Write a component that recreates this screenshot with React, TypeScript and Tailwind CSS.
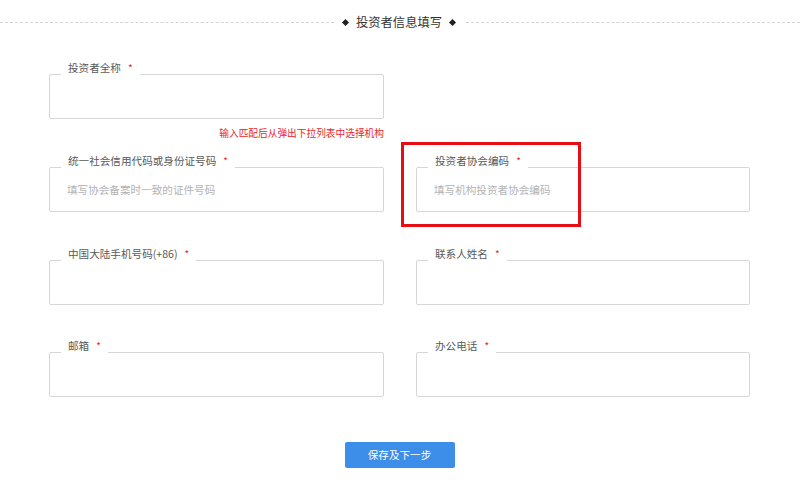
import React from "react";

const font = { fontFamily: '"Noto Sans CJK SC", "Noto Sans", sans-serif' };

function Field({
  label,
  placeholder,
  children,
}: {
  label: string;
  placeholder?: string;
  children?: React.ReactNode;
}) {
  return (
    <div className="relative">
      <div className="relative h-[45px] rounded-[2px] border border-[#d6d6d6] bg-white">
        <input
          className="h-full w-full bg-transparent pl-[17px] text-[10.6px] text-[#333] outline-none placeholder:text-[#b3b3b3]"
          placeholder={placeholder}
        />
        <div className="absolute left-[11px] top-[-17px] flex h-[20px] items-center bg-white px-[7px] text-[10.6px] leading-[20px] text-[#595959]">
          <span>{label}</span>
          <span className="ml-[7px] text-[10px] text-[#e8262b]">*</span>
        </div>
      </div>
      {children}
    </div>
  );
}

export default function App() {
  return (
    <div className="h-[488px] w-[800px] overflow-hidden bg-white" style={font}>
      <div className="mt-[12px] flex h-[20px] items-center">
        <div className="h-0 flex-1 border-t border-dashed border-[#d4d4d4]" />
        <div className="ml-[9px] h-[5px] w-[5px] rotate-45 bg-[#222]" />
        <div className="mx-[8px] text-[12.3px] leading-[20px] text-[#333]">投资者信息填写</div>
        <div className="mr-[11px] h-[5px] w-[5px] rotate-45 bg-[#222]" />
        <div className="h-0 flex-1 border-t border-dashed border-[#d4d4d4]" />
      </div>

      <div className="mt-[42px] grid grid-cols-[335px_334px] gap-x-[32px] pl-[49px]">
        <div>
          <Field label="投资者全称" />
          <div className="mt-[7px] text-right text-[9.7px] leading-[14px] text-[#e8262b]">
            输入匹配后从弹出下拉列表中选择机构
          </div>
        </div>
        <div />
      </div>

      <div className="mt-[27px] grid grid-cols-[335px_334px] gap-x-[32px] pl-[49px]">
        <Field label="统一社会信用代码或身份证号码" placeholder="填写协会备案时一致的证件号码" />
        <Field label="投资者协会编码" placeholder="填写机构投资者协会编码">
          <div className="pointer-events-none absolute left-[-15px] top-[-25px] h-[85px] w-[180px] border-[3px] border-[#e60e14]" />
        </Field>
      </div>

      <div className="mt-[48px] grid grid-cols-[335px_334px] gap-x-[32px] pl-[49px]">
        <Field label="中国大陆手机号码(+86)" />
        <Field label="联系人姓名" />
      </div>

      <div className="mt-[47px] grid grid-cols-[335px_334px] gap-x-[32px] pl-[49px]">
        <Field label="邮箱" />
        <Field label="办公电话" />
      </div>

      <div className="mt-[45px] flex justify-center">
        <button className="ml-[-1px] h-[26px] w-[110px] rounded-[2px] bg-[#3c8ee9] text-[10.6px] text-white">
          保存及下一步
        </button>
      </div>
    </div>
  );
}
